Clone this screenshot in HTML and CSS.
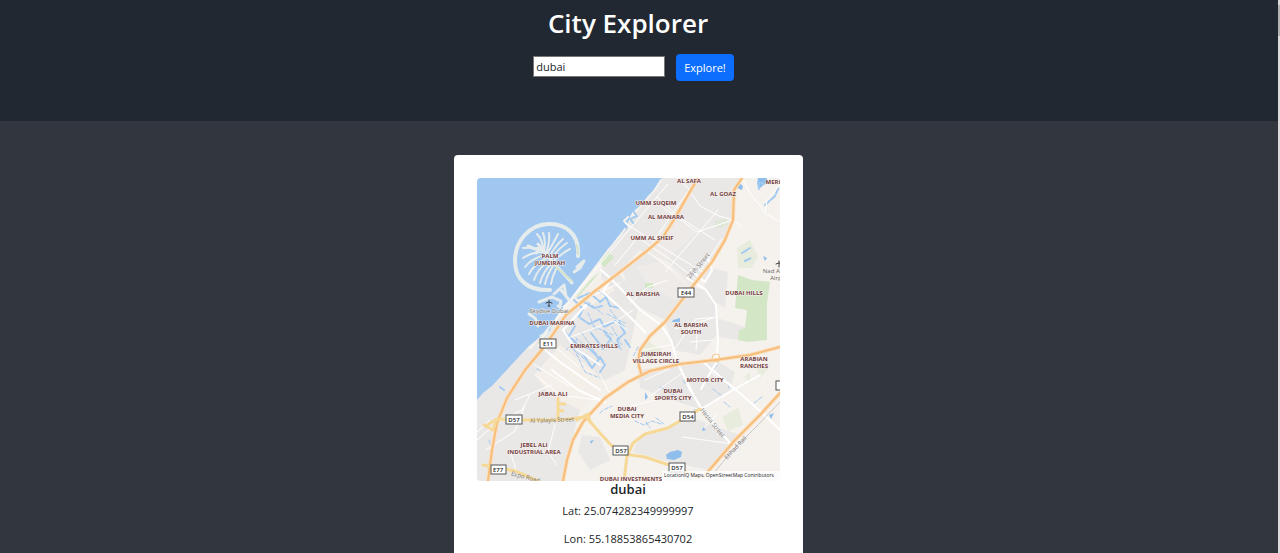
FILE: index.html
```html
<!DOCTYPE html>
<html lang="en">
<head>
<meta charset="utf-8">
<meta name="viewport" content="width=device-width, initial-scale=1">
<title>City Explorer</title>
<link rel="stylesheet" href="styles.css">
</head>
<body>
<header class="header">
  <h1 class="title">City Explorer</h1>
  <form class="search">
    <input class="search-input" type="text" value="dubai" aria-label="City">
    <button class="search-button" type="submit">Explore!</button>
  </form>
</header>
<main class="main">
  <article class="card">
    <svg class="map" viewBox="477 178 303 303" role="img" aria-label="Map of dubai">
      <rect class="land" x="477" y="178" width="303" height="303"/>
      <!-- built-up areas -->
      <g class="urban">
        <path d="M662 178H742L735 193 733 220 712 262 690 288 668 262 640 250 622 268 600 285 604 255 640 208Z"/>
        <path d="M692 287 715 292 717 335 700 355 674 350 668 330 665 322Z"/>
        <path d="M622 268 648 252 690 288 665 320 648 312 632 302Z"/>
        <path d="M700 265 728 272 725 308 712 300 704 285Z"/>
        <path d="M717 318 755 330 740 340 717 337Z"/>
        <path d="M545 330 618 272 640 300 625 370 595 385 560 360 515 400 500 395Z"/>
        <path d="M477 400 520 345 560 360 580 410 572 440 563 481H477Z"/>
        <path d="M638 370 690 362 715 360 735 372 730 390 700 409 672 400 640 388Z"/>
        <path d="M640 437 690 417 740 435 708 470 670 462 632 452Z"/>
        <path d="M582 435 600 437 610 460 590 470 578 452Z"/>
      </g>
      <g class="sand">
        <path d="M560 345 590 368 610 388 580 410 550 395 535 374Z"/>
        <path d="M668 260 692 284 675 300 650 286 636 267Z" opacity=".4"/>
        <path d="M570 300 600 278 615 290 585 310Z"/>
        <path d="M660 230 675 220 697 232 665 262 645 252Z" opacity=".3"/>
      </g>
      <!-- parks -->
      <g class="park">
        <path d="M738 275 752 280 770 282 767 303V340L748 342 738 340 739 330 745 328 747 310 735 308Z"/>
        <path d="M607 250 614 258 604 267 599 262Z"/>
        <path d="M645 283H653V288H645Z"/>
        <path d="M592 278 600 272 580 295 575 298Z"/>
        <path opacity=".4" d="M737 248 750 240 758 256 752 268 738 268ZM722 417 738 408 743 425 728 431ZM744 377 750 372 751 384ZM714 221 726 218 728 225 716 229ZM645 340 662 350 650 360 638 353ZM754 364 770 367 760 378Z"/>
      </g>
      <!-- sea -->
      <path class="water" d="M477 178H662L655 190 648 196 641 205 633 211 629 219 627 229 618 238 607 250 598 262 589 274 579 287 570 299 560 309 548 327 540 337 528 347 515 361 503 374 492 386 483 393 477 400Z"/>
      <path class="coast" d="M661 180 654 191 641 206 M628 217 624 221 629 226 M625 229 605 255 572 299"/>
      <!-- Palm island -->
      <g class="island">
        <path class="ring" d="M578 256C580 233 564 223 548 224C528 225 515 242 515 261C515 279 527 291 550 290"/>
        <path class="trunk" d="M538 244 552 261 572 283"/>
        <path class="frond" d="M543 251Q536 247 523 248M543 252Q532 252 523 258M545 255Q532 258 525 267M547 258Q534 264 529 274M549 261Q538 268 534 280M551 264Q543 272 540 283M553 266Q547 275 545 284M556 269Q552 277 551 284M543 251Q543 240 537 234M544 251Q546 240 543 233M546 253Q550 242 549 233M547 254Q554 242 558 234M549 257Q556 245 563 239M551 259Q559 248 567 243M554 261Q562 253 570 249"/>
        <path class="trunk" d="M528 246 535 249 541 248 536 253"/>
        <path class="small" d="M577 267 584 261 580 268 574 272M539 302 552 297 561 301 560 306M554 294 564 285M564 285 566 296M529 314 535 318 538 326M541 336 548 333 555 323M561 290 570 301M558 306 568 312"/>
        <path class="green-line" d="M554 265 572 281M577 245 578 254"/>
      </g>
      <!-- lakes and canals -->
      <g class="lake">
        <path d="M666 455 670 452 678 450 682 452 681 457 674 460 667 459ZM673 320 680 318 680 322 672 322ZM758 178H767L766 183 760 188 757 184ZM590 441 594 440 591 444ZM769 415 774 413 771 419ZM645 392 648 397 645 400ZM703 427 706 430 702 431ZM738 182 743 186 742 190 737 188ZM763 256 767 258 765 261Z"/>
        <path class="canal" d="M640 204 633 211 637 216 630 219 634 224M578 298 590 293 600 302 606 297 610 306 620 308M574 300 583 309 579 317 589 324 600 319 604 327 616 321M575 326 569 336 578 345 591 349 599 359 592 368 583 354 572 344M591 333 598 342 603 349 611 339 604 331M619 323 625 333 617 340 620 349M600 357 605 365 600 372M584 302 594 308 602 306M562 308 555 317 549 330M759 189Q757 180 764 184M765 205 775 196 779 187M500 387 504 390M625 340 630 347M742 253 750 248M745 261 751 258"/>
        <path class="canal fine" d="M576 338 594 354M581 332 603 363M593 326 613 335M607 314 625 323M572 348 590 364M598 291 611 299M646 422 650 428M656 418 664 424M683 380 688 388M713 389 722 396M727 381 729 388M489 440 490 444M712 370 717 366M638 347 633 357M724 402 730 407M566 332 585 372 600 378M605 335 622 350M583 298 603 314M588 313 596 330M612 327 622 345M610 310 627 330M577 340 566 350M635 421 644 425 652 421 661 424M600 413 603 410 612 406M660 387 669 391 681 401M694 410 702 410M754 403 762 397M537 369 541 371"/>
      </g>
      <!-- side streets -->
      <path class="street" d="M668 184 628 231 575 294 542 338M661 206 697 232 733 220M677 178 688 188 700 206 719 216 733 220M640 239 671 260 699 282M625 223 665 249 704 273M657 197 680 218 715 240M697 178 647 251M718 210 665 272M640 235 615 265M742 178 750 193 765 213 780 222M765 213 767 200 780 185M733 220 741 226M645 250 672 270"/>
      <path class="street main-street" d="M601 270 609 277 622 290 640 310 661 325 671 340 678 364 688 384 700 407M687 278 706 290 716 305 718 340 716 363 701 389M691 270 705 282 712 270 707 255M612 277 603 292 628 315 645 332M586 305 563 330 575 348 600 365M539 345 560 362 600 390M552 370 578 390 605 402M701 409 735 389 760 375M687 385 704 412 730 443M703 362 735 389 760 411 780 430"/>
      <path class="street" d="M477 440 498 422 522 410 530 395M486 450 515 431 525 405M510 450 518 477M555 425 548 452 557 465M535 375 560 395 598 400M515 400 552 385M630 303 648 287 668 280M615 322 633 310M675 329 713 318M690 342 713 340M698 322 696 350M643 350 671 345M645 380 669 369M650 396 681 374M631 406 660 399M718 414 705 427M683 437 732 444M477 432 490 420M551 343 579 367M530 362 569 386M592 296 620 283M600 375 610 394M568 338 613 321 628 330M704 360 713 374 735 389M674 350 696 319 717 317M700 272 722 239"/>
      <!-- highways -->
      <g class="highway-casing">
        <path d="M698 178 688 195 675 218 663 237 648 250 620 272 595 291 566 315 545 346 525 370 507 398 497 423 492 450 488 481"/>
        <path d="M742 178 734 190 733 220 725 240 712 262 692 287 665 322 650 336 640 350 638 362 641 373"/>
        <path d="M780 347 750 355 715 360 680 364 650 371 628 382 605 398 592 412 583 422 573 440 567 460 563 481"/>
        <path d="M780 393 760 415 735 440 718 460 705 475"/>
      </g>
      <g class="highway">
        <path d="M698 178 688 195 675 218 663 237 648 250 620 272 595 291 566 315 545 346 525 370 507 398 497 423 492 450 488 481"/>
        <path d="M742 178 734 190 733 220 725 240 712 262 692 287 665 322 650 336 640 350 638 362 641 373"/>
        <path d="M780 347 750 355 715 360 680 364 650 371 628 382 605 398 592 412 583 422 573 440 567 460 563 481"/>
        <path d="M780 393 760 415 735 440 718 460 705 475"/>
      </g>
      <circle class="roundabout" cx="716" cy="358" r="4"/>
      <g class="road">
        <path d="M487 425 497 419 530 420 560 420 586 417 600 433 611 445 624 454 645 457 672 466 700 478"/>
        <path d="M700 409 690 415 668 428 645 434 633 443 627 456 624 481"/>
        <path d="M483 465 500 468 515 471 538 481M484 425 493 430 496 421M558 398V419M559 404 565 404M559 410 563 411M577 420 588 414 590 422"/>
      </g>
      <path class="rail" d="M780 402 755 428 733 450 707 481"/>
      <!-- place names -->
      <g class="place">
        <text x="689" y="183">AL SAFA</text>
        <text x="773" y="184">MERI</text>
        <text x="723" y="196">AL GOAZ</text>
        <text x="656" y="205">UMM SUQEIM</text>
        <text x="666" y="219">AL MANARA</text>
        <text x="652" y="240">UMM AL SHEIF</text>
        <text x="550" y="258">PALM</text>
        <text x="550" y="265">JUMEIRAH</text>
        <text x="643" y="296">AL BARSHA</text>
        <text x="744" y="295">DUBAI HILLS</text>
        <text x="552" y="325">DUBAI MARINA</text>
        <text x="691" y="327">AL BARSHA</text>
        <text x="691" y="334">SOUTH</text>
        <text x="594" y="348">EMIRATES HILLS</text>
        <text x="656" y="356">JUMEIRAH</text>
        <text x="656" y="363">VILLAGE CIRCLE</text>
        <text x="754" y="361">ARABIAN</text>
        <text x="754" y="368">RANCHES</text>
        <text x="705" y="382">MOTOR CITY</text>
        <text x="673" y="393">DUBAI</text>
        <text x="673" y="400">SPORTS CITY</text>
        <text x="627" y="411">DUBAI</text>
        <text x="627" y="418">MEDIA CITY</text>
        <text x="553" y="396">JABAL ALI</text>
        <text x="534" y="447">JEBEL ALI</text>
        <text x="534" y="454">INDUSTRIAL AREA</text>
        <text x="631" y="481">DUBAI INVESTMENTS</text>
      </g>
      <g class="poi">
        <text x="549" y="313">Skydive Dubai</text>
        <text x="772" y="273">Nad Al</text>
        <text x="776" y="280">Airp</text>
        <path d="M549 300V306M546 303 549 302 552 303M548 306H550M779 261V267M776 264 779 263 782 264"/>
      </g>
      <g class="street-name">
        <text transform="translate(700 267) rotate(-50)">26th Street</text>
        <text transform="translate(711 424) rotate(51)">Hessa Street</text>
        <text transform="translate(737 449) rotate(-47)">Etihad Rail</text>
        <text transform="translate(552 422) rotate(-2)">Al Yalayis Street</text>
        <text transform="translate(525 479) rotate(14)">Expo Road</text>
      </g>
      <g class="shield">
        <rect x="540" y="339" width="16" height="9"/><text x="548" y="346">E11</text>
        <rect x="678" y="288" width="16" height="9"/><text x="686" y="295">E44</text>
        <rect x="506" y="415" width="16" height="9"/><text x="514" y="422">D57</text>
        <rect x="680" y="412" width="15" height="9"/><text x="688" y="419">D54</text>
        <rect x="613" y="446" width="15" height="9"/><text x="621" y="453">D57</text>
        <rect x="669" y="463" width="16" height="9"/><text x="677" y="470">D57</text>
        <rect x="491" y="465" width="15" height="9"/><text x="498" y="472">E77</text>
        <rect x="776" y="381" width="16" height="9"/>
      </g>
      <rect class="credit-bg" x="662" y="471" width="118" height="10"/>
      <text class="credit" x="719" y="477">LocationIQ Maps, OpenStreetMap Contributors</text>
    </svg>
    <h2 class="city">dubai</h2>
    <p class="coord">Lat: 25.074282349999997</p>
    <p class="coord">Lon: 55.18853865430702</p>
  </article>
</main>
<div class="scroll-track" aria-hidden="true"><div class="scroll-thumb"></div></div>
</body>
</html>
```
FILE: styles.css
```css
* { box-sizing: border-box; }

body {
  margin: 0;
  background: #32363f;
  color: #212529;
  font-family: "Open Sans", "Noto Sans", sans-serif;
  font-size: 11px;
}

.header {
  display: flex;
  flex-direction: column;
  align-items: center;
  gap: 8px;
  padding: 0 24px 40px 0;
  background: #222831;
}

.title {
  margin: 0;
  color: #fff;
  font-size: 26px;
  font-weight: 600;
  line-height: 46px;
}

.search {
  display: flex;
  align-items: center;
  gap: 11px;
  margin: 0 0 0 11px;
}

.search-input {
  width: 132px;
  height: 21px;
  margin-bottom: 3px;
  padding: 0 2px;
  border: 1px solid #767676;
  border-radius: 0;
  background: #fff;
  color: #212529;
  font: inherit;
}

.search-button {
  height: 27px;
  padding: 0 8px;
  border: 0;
  border-radius: 4px;
  background: #0d6efd;
  color: #fff;
  font: inherit;
}

.main {
  display: flex;
  justify-content: center;
  padding: 34px 24px 34px 0;
}

.card {
  width: 349px;
  max-width: 100%;
  padding: 23px;
  border-radius: 4px;
  background: #fff;
  text-align: center;
}

.map {
  display: block;
  width: 100%;
  border-radius: 4px;
  font-family: "Open Sans", "Noto Sans", sans-serif;
}

.map path { fill: none; stroke-linejoin: round; stroke-linecap: round; }
.map .land { fill: #f5f1ed; }
.map .urban path { fill: #eae8e7; }
.map .sand path { fill: #f5efea; }
.map .park path { fill: #d3e6c6; }
.map .water { fill: #a0c7f0; }
.map .coast { stroke: #f3f1ee; stroke-width: 2; }
.map .island path { stroke: #e6ecec; stroke-width: 2; }
.map .island .ring { stroke-width: 4; }
.map .island .trunk { stroke-width: 3; }
.map .island .small { stroke-width: 3; }
.map .island .green-line { stroke: #d5e3cd; }
.map .lake path { fill: #8fbeec; }
.map .lake .canal { fill: none; stroke: #a3caf1; stroke-width: 2; stroke-dasharray: 6 2; }
.map .lake .fine { stroke-width: 1; stroke-dasharray: 4 2; }
.map .street { stroke: #fff; stroke-width: 1; }
.map .main-street { stroke-width: 2; }
.map .highway-casing path { stroke: #fbdfbb; stroke-width: 4; }
.map .highway path { stroke: #f7bd7c; stroke-width: 2; }
.map .road path { stroke: #f6d997; stroke-width: 3; }
.map .roundabout { fill: none; stroke: #f6c78f; stroke-width: 1; }
.map .rail { stroke: #c4c4c4; stroke-width: 1; stroke-dasharray: 3 1; }

.map text { text-anchor: middle; paint-order: stroke; stroke-linejoin: round; }
.place text { fill: #744244; stroke: #f5f1ed; stroke-width: 1px; font-size: 6px; font-weight: 700; }
.poi text { fill: #666; stroke: #f5f1ed; stroke-width: 1px; font-size: 6px; }
.poi path { stroke: #444; stroke-width: 1; }
.street-name text { fill: #777; font-size: 6px; }
.shield rect { fill: #fff; stroke: #555; stroke-width: 1; }
.shield text { fill: #222; font-size: 6px; font-weight: 600; }
.credit-bg { fill: #fff; opacity: .8; }
.map .credit { fill: #222; font-size: 5px; }

.city {
  margin: 0 0 4px;
  font-size: 13px;
  font-weight: 600;
  line-height: 17px;
}

.coord {
  margin: 0 0 11px;
  line-height: 17px;
}

.scroll-track {
  position: fixed;
  top: 0;
  right: 0;
  bottom: 0;
  width: 2px;
  padding-top: 5px;
  background: #dcdcdc;
}

.scroll-thumb { height: 31px; background: #b5b5b5; }
```
